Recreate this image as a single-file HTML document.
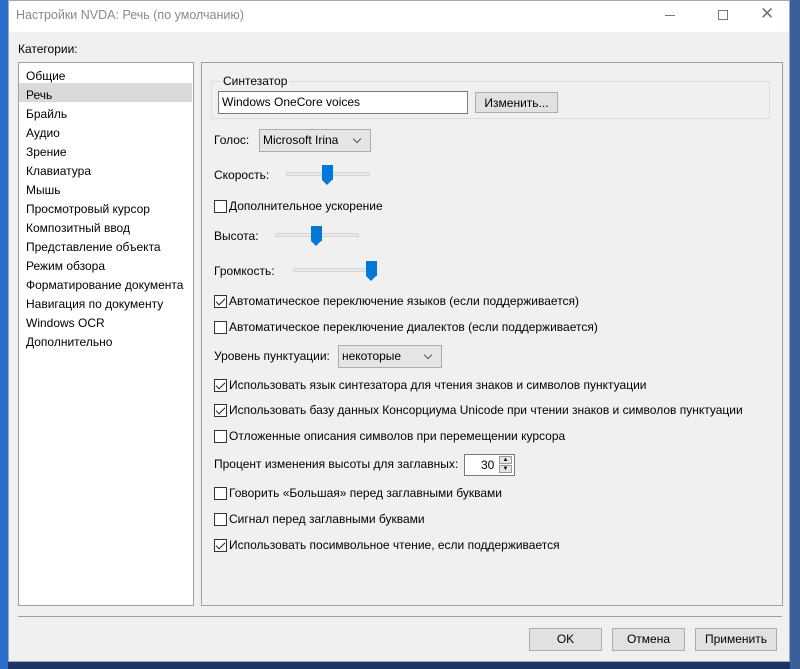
<!DOCTYPE html>
<html><head><meta charset="utf-8"><style>
*{box-sizing:border-box;margin:0;padding:0}
body{width:800px;height:669px;background:#1d3563;position:relative;overflow:hidden;font-family:"Liberation Sans",sans-serif;font-size:12px;color:#000}
.a{position:absolute}
.win{left:8px;top:0;width:782px;height:662px;background:#f0f0f0;border:1px solid #9aa9c4}
.t{white-space:nowrap}
.cb{position:absolute;width:13px;height:13px;border:1px solid #333;background:#fff}
.cb.c::after{content:"";position:absolute;left:3px;top:0px;width:4px;height:8px;border:solid #222;border-width:0 1.5px 1.5px 0;transform:rotate(45deg)}
.btn{position:absolute;background:#e1e1e1;border:1px solid #adadad;text-align:center;line-height:21px}
.track{position:absolute;height:4px;background:#e7e7e7;border:1px solid #d6d6d6}
.thumb{position:absolute;width:11px;height:15px;background:#0078d7}
.thumb::after{content:"";position:absolute;left:0;top:15px;border-left:5.5px solid transparent;border-right:5.5px solid transparent;border-top:5px solid #0078d7}
.combo{position:absolute;background:#e5e5e5;border:1px solid #acacac;padding-left:3px;line-height:20px}
.combo::after{content:"";position:absolute;right:10px;top:6px;width:5px;height:5px;border:solid #555;border-width:0 1px 1px 0;transform:rotate(45deg)}
</style></head><body>
<div class="a" style="left:0;top:0;width:8px;height:669px;background:#2a6fc9"></div>
<div class="a" style="left:790px;top:0;width:10px;height:669px;background:#3a5f9a"></div>
<div class="a win"></div>
<div class="a" style="left:9px;top:1px;width:780px;height:31px;background:#fff"></div>
<div class="a t" style="left:16px;top:8px;font-size:12.5px;color:#8a8a8a">Настройки NVDA: Речь (по умолчанию)</div>
<div class="a" style="left:665px;top:15px;width:10px;height:1px;background:#777"></div>
<div class="a" style="left:718px;top:10px;width:10px;height:10px;border:1px solid #777"></div>
<div class="a t" style="left:760px;top:4px;font-size:17px;color:#777">✕</div>
<div class="a t" style="left:18px;top:42px">Категории:</div>
<div class="a" style="left:18px;top:62px;width:176px;height:544px;background:#fff;border:1px solid #a0a0a0"></div>
<div class="a" style="left:19px;top:83px;width:173px;height:19px;background:#d9d9d9"></div>
<div class="a" style="left:26px;top:67px;line-height:19px">Общие<br>Речь<br>Брайль<br>Аудио<br>Зрение<br>Клавиатура<br>Мышь<br>Просмотровый курсор<br>Композитный ввод<br>Представление объекта<br>Режим обзора<br>Форматирование документа<br>Навигация по документу<br>Windows OCR<br>Дополнительно</div>
<div class="a" style="left:201px;top:62px;width:582px;height:544px;border:1px solid #a0a0a0"></div>
<div class="a" style="left:211px;top:81px;width:559px;height:38px;border:1px solid #dcdcdc;border-radius:2px"></div>
<div class="a t" style="left:220px;top:74px;background:#f0f0f0;padding:0 3px">Синтезатор</div>
<div class="a" style="left:218px;top:91px;width:250px;height:23px;background:#fff;border:1px solid #7a7a7a;padding:3px 3px">Windows OneCore voices</div>
<div class="btn" style="left:475px;top:92px;width:83px;height:21px">Изменить...</div>
<div class="a t" style="left:214px;top:133px">Голос:</div>
<div class="combo" style="left:259px;top:129px;width:112px;height:23px">Microsoft Irina</div>
<div class="a t" style="left:214px;top:168px">Скорость:</div>
<div class="track" style="left:286px;top:172px;width:84px"></div><div class="thumb" style="left:322px;top:165px"></div>
<div class="cb" style="left:214px;top:200px"></div><div class="a t" style="left:229px;top:199px">Дополнительное ускорение</div>
<div class="a t" style="left:214px;top:229px">Высота:</div>
<div class="track" style="left:275px;top:233px;width:84px"></div><div class="thumb" style="left:311px;top:226px"></div>
<div class="a t" style="left:214px;top:264px">Громкость:</div>
<div class="track" style="left:293px;top:268px;width:84px"></div><div class="thumb" style="left:366px;top:261px"></div>
<div class="cb c" style="left:214px;top:295px"></div><div class="a t" style="left:229px;top:294px">Автоматическое переключение языков (если поддерживается)</div>
<div class="cb" style="left:214px;top:321px"></div><div class="a t" style="left:229px;top:320px">Автоматическое переключение диалектов (если поддерживается)</div>
<div class="a t" style="left:214px;top:349px">Уровень пунктуации:</div>
<div class="combo" style="left:338px;top:345px;width:104px;height:23px">некоторые</div>
<div class="cb c" style="left:214px;top:379px"></div><div class="a t" style="left:229px;top:378px">Использовать язык синтезатора для чтения знаков и символов пунктуации</div>
<div class="cb c" style="left:214px;top:404px"></div><div class="a t" style="left:229px;top:403px">Использовать базу данных Консорциума Unicode при чтении знаков и символов пунктуации</div>
<div class="cb" style="left:214px;top:430px"></div><div class="a t" style="left:229px;top:429px">Отложенные описания символов при перемещении курсора</div>
<div class="a t" style="left:214px;top:457px">Процент изменения высоты для заглавных:</div>
<div class="a" style="left:464px;top:454px;width:51px;height:22px;background:#fff;border:1px solid #7a7a7a"></div>
<div class="a t" style="left:481px;top:458px">30</div>
<div class="a" style="left:499px;top:456px;width:13px;height:8px;background:#e5e5e5;border:1px solid #999;font-size:6px;line-height:6px;text-align:center">▲</div>
<div class="a" style="left:499px;top:465px;width:13px;height:8px;background:#e5e5e5;border:1px solid #999;font-size:6px;line-height:6px;text-align:center">▼</div>
<div class="cb" style="left:214px;top:487px"></div><div class="a t" style="left:229px;top:486px">Говорить «Большая» перед заглавными буквами</div>
<div class="cb" style="left:214px;top:513px"></div><div class="a t" style="left:229px;top:512px">Сигнал перед заглавными буквами</div>
<div class="cb c" style="left:214px;top:539px"></div><div class="a t" style="left:229px;top:538px">Использовать посимвольное чтение, если поддерживается</div>
<div class="a" style="left:18px;top:616px;width:764px;height:1px;background:#a0a0a0"></div>
<div class="btn" style="left:529px;top:628px;width:73px;height:23px">OK</div>
<div class="btn" style="left:612px;top:628px;width:73px;height:23px">Отмена</div>
<div class="btn" style="left:695px;top:628px;width:82px;height:23px">Применить</div>
</body></html>
